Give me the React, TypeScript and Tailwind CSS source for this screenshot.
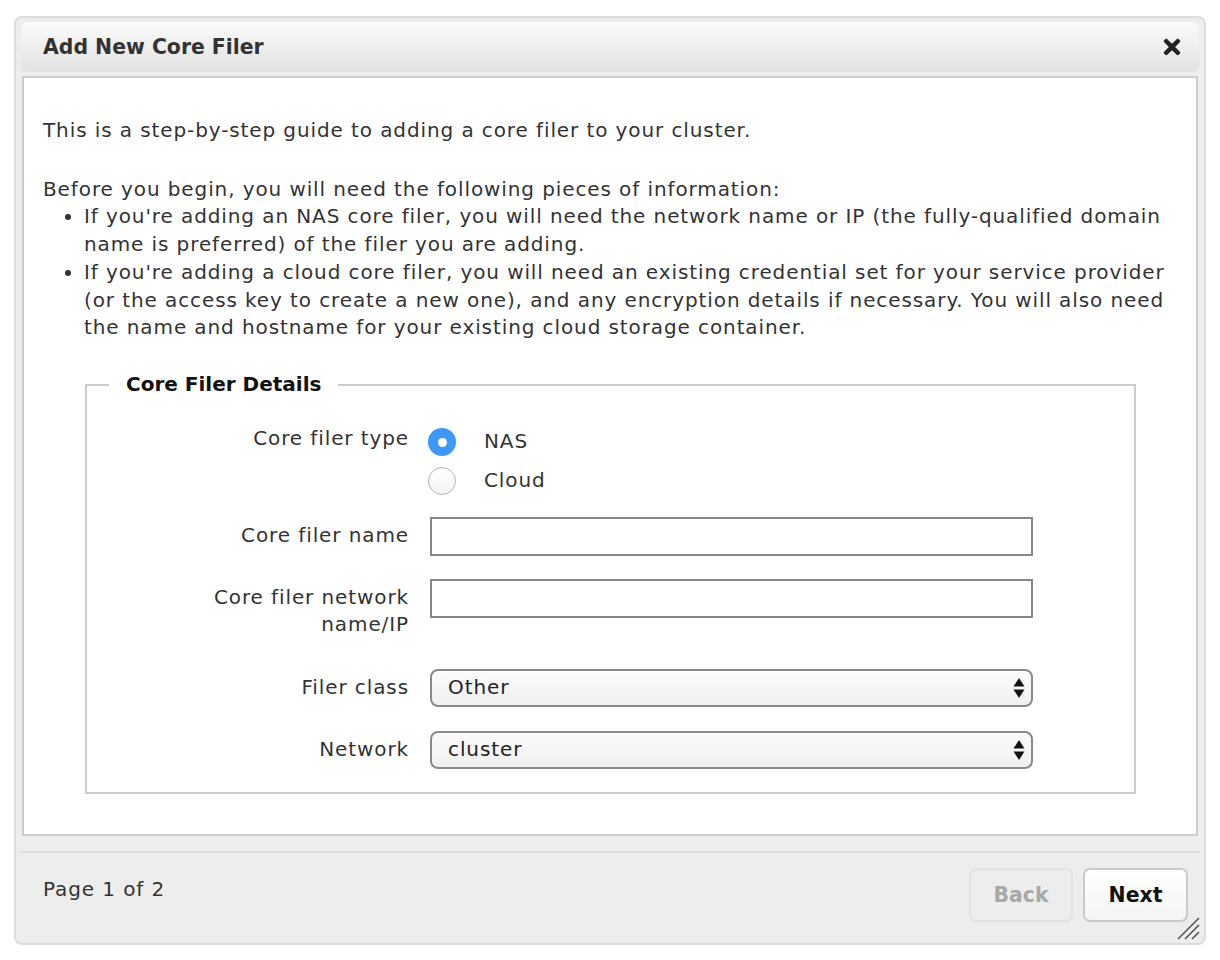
import React from "react";
import { FaTimes } from "react-icons/fa";

const font = { fontFamily: '"DejaVu Sans", Verdana, sans-serif' };

function Row({ label, top = 5, children }: { label: React.ReactNode; top?: number; children: React.ReactNode }) {
  return (
    <div className="flex items-start">
      <div
        className={`w-[322px] text-right leading-[27px] tracking-[0.9px] text-[#333] ${top === 3 ? "pt-[3px]" : "pt-[5px]"}`}
      >
        {label}
      </div>
      <div className="ml-[21px]">{children}</div>
    </div>
  );
}

function Radio({ checked, label }: { checked?: boolean; label: string }) {
  return (
    <div className="flex items-center h-[39px] -ml-[2px]">
      {checked ? (
        <span className="w-[28px] h-[28px] rounded-full bg-[#3d98f7] flex items-center justify-center">
          <span className="w-[9px] h-[9px] rounded-full bg-white" />
        </span>
      ) : (
        <span className="w-[28px] h-[28px] rounded-full border border-[#b5b5b5] bg-gradient-to-b from-white to-[#f3f3f3]" />
      )}
      <span className="ml-[28px] text-[#333] tracking-[0.9px]">{label}</span>
    </div>
  );
}

function Select({ value }: { value: string }) {
  return (
    <div className="w-[603px] h-[38px] border-2 border-[#8a8a8a] rounded-[8px] bg-gradient-to-b from-[#fbfbfb] to-[#f0f0f0] flex items-center justify-between pl-[16px] pr-[6px]">
      <span className="text-[#222] tracking-[0.9px]">{value}</span>
      <svg width="12" height="22" viewBox="0 0 12 22">
        <path d="M6 1 L11.5 9.5 H0.5 Z" fill="#111" />
        <path d="M6 21 L11.5 12.5 H0.5 Z" fill="#111" />
      </svg>
    </div>
  );
}

export default function App() {
  return (
    <div className="w-[1220px] h-[960px] bg-white pt-[16px] pl-[14px]" style={font}>
      <div className="w-[1192px] h-[929px] border-2 border-[#dcdcdc] rounded-[8px] bg-[#ededed] flex flex-col relative">
        <div className="mx-[5px] mt-[4px] h-[50px] rounded-[7px] bg-gradient-to-b from-[#fbfbfb] to-[#e2e2e2] flex items-center justify-between pl-[22px] pr-[15px]">
          <span className="text-[20.4px] font-bold text-[#333]">Add New Core Filer</span>
          <FaTimes className="text-[#222] text-[24px]" />
        </div>
        <div className="mx-[6px] mt-[4px] h-[760px] border-2 border-[#cccccc] bg-white px-[19px] pt-[39px] text-[20px] leading-[27.7px] text-[#333]">
          <div className="tracking-[0.9px]">
            <p className="mb-[31px]">This is a step-by-step guide to adding a core filer to your cluster.</p>
            <p>Before you begin, you will need the following pieces of information:</p>
            <ul className="list-disc pl-[41px]">
              <li>
                If you're adding an NAS core filer, you will need the network name or IP (the fully-qualified domain name is
                preferred) of the filer you are adding.
              </li>
              <li>
                If you're adding a cloud core filer, you will need an existing credential set for your service provider (or the
                access key to create a new one), and any encryption details if necessary. You will also need the name and
                hostname for your existing cloud storage container.
              </li>
            </ul>
          </div>
          <fieldset className="mt-[29px] ml-[42px] w-[1051px] h-[423px] border-2 border-[#cccccc] pl-0 pr-0 pt-[23px]">
            <legend className="ml-[22px] px-[17px] font-bold text-[#111]">Core Filer Details</legend>
            <div className="flex flex-col">
              <Row label="Core filer type" top={3}>
                <div className="pt-[1px]">
                  <Radio checked label="NAS" />
                  <Radio label="Cloud" />
                </div>
              </Row>
              <div className="mt-[16px]">
                <Row label="Core filer name">
                  <div className="w-[603px] h-[39px] border-2 border-[#888]" />
                </Row>
              </div>
              <div className="mt-[23px]">
                <Row label={<>Core filer network<br />name/IP</>}>
                  <div className="w-[603px] h-[39px] border-2 border-[#888]" />
                </Row>
              </div>
              <div className="mt-[31px]">
                <Row label="Filer class">
                  <Select value="Other" />
                </Row>
              </div>
              <div className="mt-[24px]">
                <Row label="Network">
                  <Select value="cluster" />
                </Row>
              </div>
            </div>
          </fieldset>
        </div>
        <div className="mx-[4px] mt-[15px] border-t-2 border-[#dddddd] flex-1 flex items-start justify-between pl-[23px] pr-[12px]">
          <span className="mt-[21px] text-[20px] text-[#333] tracking-[0.9px]">Page 1 of 2</span>
          <div className="flex gap-[10px] mt-[15px]">
            <button className="w-[104px] h-[54px] rounded-[7px] border-2 border-[#e2e2e2] bg-[#ededed] text-[20.4px] font-bold text-[#a8a8a8]">
              Back
            </button>
            <button className="w-[105px] h-[54px] rounded-[7px] border-2 border-[#cacaca] bg-gradient-to-b from-white to-[#f4f4f4] text-[20.4px] font-bold text-[#111]">
              Next
            </button>
          </div>
        </div>
        <svg className="absolute right-[4px] bottom-[3px]" width="24" height="24" viewBox="0 0 24 24">
          <path d="M2 23 L23 2 M9 23 L23 9 M16 23 L23 16" stroke="#555" strokeWidth="1.6" />
        </svg>
      </div>
    </div>
  );
}
